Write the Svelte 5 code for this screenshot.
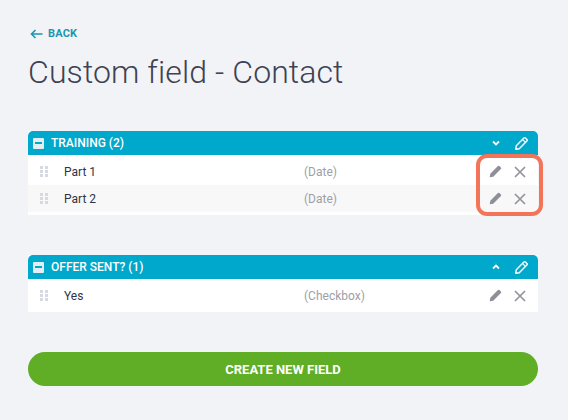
<script>
  const groups = [
    { name: 'TRAINING (2)', open: true, fields: [{ name: 'Part 1', type: '(Date)' }, { name: 'Part 2', type: '(Date)' }] },
    { name: 'OFFER SENT? (1)', open: false, fields: [{ name: 'Yes', type: '(Checkbox)' }] }
  ];
  const pencil = 'M0.8 13.2 L1.4 9.4 L9.6 1.2 Q10.4 0.4 11.2 1.2 L12.8 2.8 Q13.6 3.6 12.8 4.4 L4.6 12.6 Z';
</script>

<div class="page">
  <a class="back" href="#back">
    <svg width="13" height="10" viewBox="0 0 13 10" fill="none">
      <path d="M12.5 5H2M5.5 1L1.5 5l4 4" stroke="currentColor" stroke-width="1.6"/>
    </svg>
    BACK
  </a>
  <h1>Custom field - Contact</h1>

  {#each groups as group}
    <section class="group">
      <header>
        <span class="minus"><span></span></span>
        <span class="group-name">{group.name}</span>
        <svg class="chevron" width="8" height="6" viewBox="0 0 8 6" fill="none">
          <path d={group.open ? 'M1 1.5L4 4.5L7 1.5' : 'M1 4.5L4 1.5L7 4.5'} stroke="white" stroke-width="1.8"/>
        </svg>
        <svg class="head-pencil" width="13" height="13" viewBox="0 0 14 14" fill="none">
          <path d={pencil} stroke="white" stroke-width="1.5" stroke-linejoin="round"/>
          <path d="M8.3 2.8L11.2 5.7" stroke="white" stroke-width="1.3"/>
        </svg>
      </header>
      <div class="rows">
        {#each group.fields as field}
          <div class="row">
            <svg class="grip" width="8" height="11" viewBox="0 0 8 11" fill="#d6d8e2">
              <rect x="0" y="0" width="3" height="3"/><rect x="5" y="0" width="3" height="3"/>
              <rect x="0" y="4" width="3" height="3"/><rect x="5" y="4" width="3" height="3"/>
              <rect x="0" y="8" width="3" height="3"/><rect x="5" y="8" width="3" height="3"/>
            </svg>
            <span class="field-name">{field.name}</span>
            <span class="field-type">{field.type}</span>
            <svg class="edit" width="13" height="13" viewBox="0 0 14 14">
              <path d={pencil} fill="#8f8f99"/>
            </svg>
            <svg class="remove" width="12" height="12" viewBox="0 0 12 12" fill="none">
              <path d="M1 1L11 11M11 1L1 11" stroke="#94949c" stroke-width="1.7"/>
            </svg>
          </div>
        {/each}
      </div>
    </section>
  {/each}

  <button type="button">CREATE NEW FIELD</button>

  <!-- highlight drawn over the screenshot -->
  <div class="highlight"></div>
</div>

<style>
  :global(body) {
    background: #f2f3f6;
  }

  .page {
    position: relative;
    box-sizing: border-box;
    width: 568px;
    height: 420px;
    padding: 28px 30px 0 28px;
    background: #f2f3f6;
    font-family: Roboto, sans-serif;
    overflow: hidden;
  }

  .back {
    display: flex;
    align-items: center;
    gap: 5px;
    height: 12px;
    padding-left: 2px;
    color: #1a97b0;
    font-size: 11px;
    font-weight: 700;
    letter-spacing: 0.2px;
    line-height: 12px;
    text-decoration: none;
  }

  h1 {
    margin: 11px 0 38px;
    color: #3d4254;
    font-size: 32px;
    font-weight: 300;
    letter-spacing: 0.1px;
    line-height: 42px;
  }

  .group {
    margin-bottom: 40px;
    background: #fff;
  }

  header {
    display: flex;
    align-items: center;
    height: 24px;
    padding: 0 10px 0 5px;
    background: #00a8cb;
    border-radius: 5px 5px 0 0;
    color: #fff;
  }

  .minus {
    display: flex;
    align-items: center;
    justify-content: center;
    width: 11px;
    height: 11px;
    background: #e3eef2;
    border-radius: 1px;
  }

  .minus span {
    width: 7px;
    height: 2px;
    background: #00a8cb;
  }

  .group-name {
    flex: 1;
    margin-left: 7px;
    font-size: 12px;
    font-weight: 500;
  }

  .head-pencil {
    margin-left: 15px;
  }

  .rows {
    padding: 3px 0;
  }

  .row {
    display: flex;
    align-items: center;
    height: 27px;
    padding: 0 12px 0 12px;
    font-size: 12px;
  }

  .row:nth-child(even) {
    background: #f8f8f9;
  }

  .field-name {
    width: 240px;
    margin-left: 16px;
    color: #2f3346;
  }

  .field-type {
    flex: 1;
    color: #9d9fa8;
  }

  .edit {
    margin-right: 12px;
  }

  button {
    display: block;
    width: 510px;
    height: 34px;
    background: #5fae26;
    border: none;
    border-radius: 17px;
    color: #fff;
    font-family: inherit;
    font-size: 13px;
    font-weight: 700;
  }

  .highlight {
    position: absolute;
    left: 476px;
    top: 154px;
    box-sizing: border-box;
    width: 67px;
    height: 62px;
    border: 4px solid #f4745a;
    border-radius: 11px;
  }
</style>
